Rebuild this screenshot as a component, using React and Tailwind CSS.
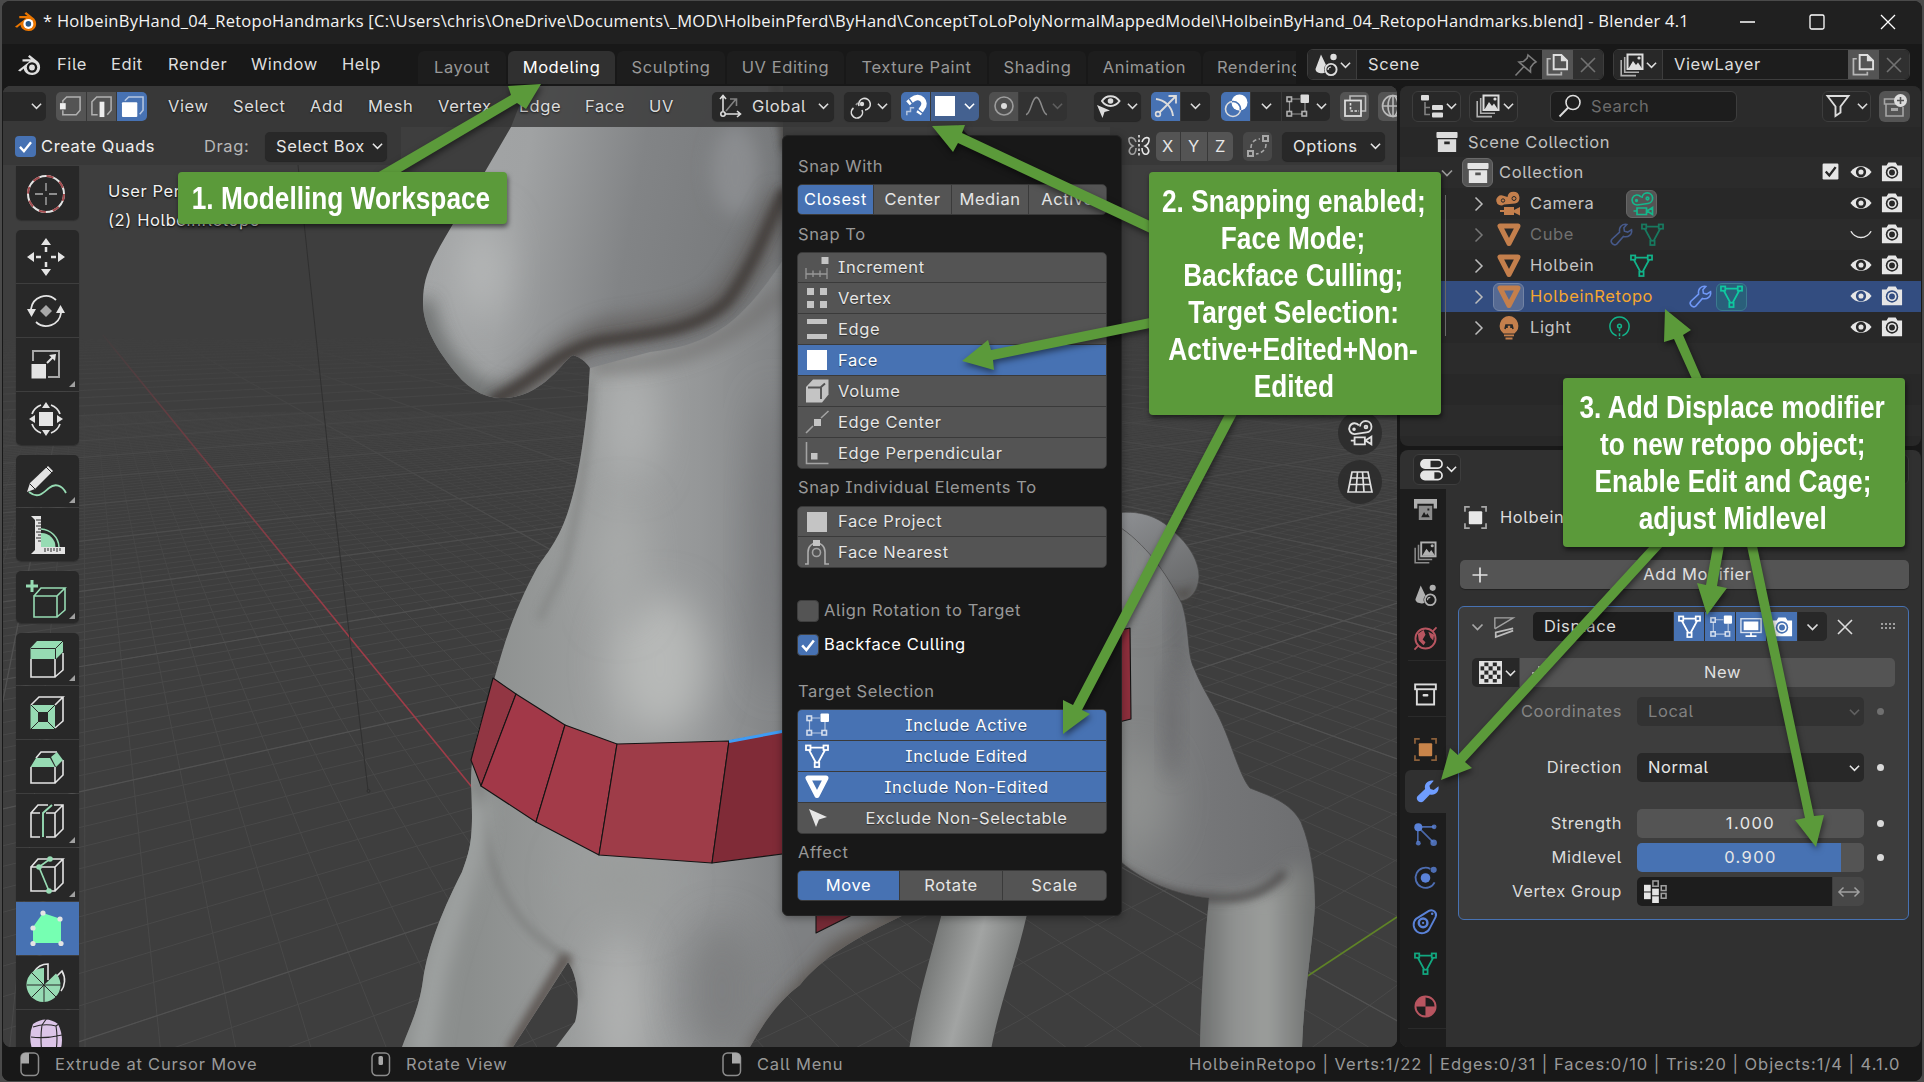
import React from "react";

/* ---------- icons (24 x 24 grid) ---------- */
const S = { fill: "none", stroke: "currentColor", strokeWidth: 1.6 };
const ICONS = {
  logo: (
    <g>
      <path d="M1 17.5 L12.5 8.5 H5.5 V6.3 H14 L11 3.8 L12.6 2 L21 8.8 C25 13 23.5 21.5 15.5 22 C10.5 22.2 7 19 6.8 15.5 L3.2 18.5 Z" fill="currentColor" />
      <circle cx="15" cy="14.5" r="5.2" fill="var(--hole,#181818)" />
      <circle cx="15" cy="14.5" r="2.9" fill="var(--pupil,currentColor)" />
    </g>
  ),
  scene: (
    <g>
      <path d="M7 1.5 L12 12 A5.5 5.5 0 0 0 11 19.5 C9 21 1.5 20.5 1.5 16 Z" fill="currentColor" />
      <circle cx="19.5" cy="4" r="3.2" fill="currentColor" />
      <circle cx="17" cy="16.5" r="5.6" {...S} strokeWidth="1.9" />
      <path d="M14 17 a3 3 0 0 1 3 -3" {...S} strokeWidth="1.2" />
    </g>
  ),
  layers: (
    <g>
      <rect x="7.5" y="1.5" width="15" height="14.5" {...S} strokeWidth="2" />
      <path d="M8.5 15.5 L13 8 L16 12 L18 9.5 L22 15.5 Z" fill="currentColor" />
      <circle cx="19" cy="5" r="1.6" fill="currentColor" />
      <path d="M4.7 4 V19.3 H19 M1.2 7 V22.6 H16" {...S} opacity=".75" />
    </g>
  ),
  pin: <path d="M14 2 L22 9 L19.5 10.5 L16.5 14.5 V19 L5 9 L9.5 8.5 L13.2 5 Z M9.5 14 L1.5 22.5" {...S} />,
  copy: (
    <g>
      <path d="M8 2 H16 L22 8 V17 H8 Z" {...S} strokeWidth="2" />
      <path d="M15.5 1.5 V8.5 H22.5 Z" fill="currentColor" />
      <path d="M5 6 H1.5 V22.5 H16 V19.5" {...S} opacity=".7" strokeWidth="1.8" />
    </g>
  ),
  x: <path d="M5 5 L19 19 M19 5 L5 19" {...S} />,
  plus: <path d="M12 4.5 V19.5 M4.5 12 H19.5" {...S} strokeWidth="1.7" />,
  selV: (
    <g>
      <path d="M4 8 V6 L8 2 H22 V16 L18 20.5 H4 V16" {...S} opacity=".6" />
      <rect x="1" y="8.5" width="6" height="6.5" fill="currentColor" />
    </g>
  ),
  selE: (
    <g>
      <path d="M8 20.5 H2 V7 L7 2 H22 V16 L18 20.5" {...S} opacity=".6" />
      <rect x="10" y="7" width="5" height="16" fill="currentColor" />
    </g>
  ),
  selF: (
    <g>
      <path d="M4 6 L8 2 H23 V16 L19.5 20" {...S} opacity=".6" />
      <rect x="1" y="7.5" width="16" height="15.5" rx="1" fill="currentColor" />
    </g>
  ),
  orient: (
    <g>
      <path d="M5 17 V2 M2 5 L5 1.5 L8 5 M7 20 H22 M19 17 L22.5 20 L19 23" {...S} />
      <circle cx="5" cy="20" r="2.2" {...S} />
      <path d="M8 17 L18 5 M12 5 H18.5 V12" {...S} opacity=".5" />
    </g>
  ),
  pivot: (
    <g>
      <path d="M9 12 A5.8 5.8 0 1 1 15 16 M3.5 14 A5.6 5.6 0 1 0 12 16" {...S} />
      <path d="M8 9 A5.8 5.8 0 0 0 6 11" {...S} opacity=".6" />
      <circle cx="12" cy="10" r="2.2" fill="currentColor" />
    </g>
  ),
  magnet: (
    <g>
      <path d="M3.2 9 L8 5 C16 -1.500 25 7.500 18.500 15 L14.800 20.500" fill="none" stroke="currentColor" strokeWidth="6" />
      <path d="M4.500 4 L9 10.500 M20 20.500 L13 15" stroke="#4772b3" strokeWidth="1.600" />
      <path d="M2 22 V18 H6 V14 H10" {...S} opacity=".6" />
    </g>
  ),
  prop: (
    <g>
      <circle cx="12" cy="12" r="9" {...S} opacity=".55" />
      <circle cx="12" cy="12" r="3" fill="currentColor" />
    </g>
  ),
  falloff: <path d="M1 21 C6 21 7 3 12 3 C17 3 18 21 23 21" {...S} />,
  visib: (
    <g>
      <path d="M5 7 C9 .5 18 .5 22.500 7 C18 13.500 9 13.500 5 7 Z" {...S} strokeWidth="2" />
      <circle cx="13.500" cy="7" r="2.800" fill="currentColor" />
      <path d="M0 11 L13 16.500 L7.500 18 L5.500 24 Z" fill="currentColor" />
    </g>
  ),
  gizmo: (
    <g>
      <path d="M2 5 C10 6 18 12 19 22" {...S} strokeWidth="2" />
      <path d="M5 19 L21 3 M14.5 2 H22 V9.5" {...S} strokeWidth="1.8" />
      <circle cx="4" cy="20" r="2.4" {...S} />
    </g>
  ),
  overlay: (
    <g>
      <circle cx="9" cy="15" r="7.5" {...S} />
      <circle cx="15.500" cy="8.500" r="8" fill="#fff" />
      <path d="M8 7.600 A7.500 7.500 0 0 1 16.400 16" {...S} stroke="#4772b3" />
    </g>
  ),
  editmode: (
    <g>
      <path d="M7 5 H15 M4.5 7.5 V17 M7 20 H17 M20 9 V17" {...S} strokeWidth="1.2" opacity=".6" />
      <g opacity=".75">
        <rect x="2" y="3" width="4.5" height="4.5" {...S} />
        <rect x="2" y="17.5" width="4.5" height="4.5" {...S} />
        <rect x="17" y="17.5" width="4.5" height="4.5" {...S} />
      </g>
      <rect x="15.5" y="0.5" width="8.5" height="8.5" rx="1" fill="currentColor" />
    </g>
  ),
  xray: (
    <g>
      <rect x="2" y="6.500" width="16" height="15.5" {...S} strokeWidth="1.8" />
      <path d="M7 6 V2 H22.5 V17 H18" {...S} opacity=".75" />
      <path d="M7.500 9 V17 H16" {...S} strokeDasharray="2.500 1.500" />
    </g>
  ),
  globe: (
    <g opacity=".75">
      <circle cx="12" cy="12" r="10.500" {...S} />
      <ellipse cx="12" cy="12" rx="5" ry="10.500" {...S} />
      <path d="M2 12 H22 M12 2 V22" {...S} />
    </g>
  ),
  butterfly: (
    <g>
      <path d="M12 1 V23" {...S} strokeDasharray="2.500 2" />
      <path d="M9 8 C7 2 1 3 2 6 C2 9 4 11 6 12 C2 14 1 18 4 20 C7 21 9 19 9 14" {...S} opacity=".6" />
      <path d="M15 8 C17 2 23 3 22 6 C22 9 20 11 18 12 C22 14 23 18 20 20 C17 21 15 19 15 14" {...S} />
    </g>
  ),
  automerge: (
    <g opacity=".6">
      <rect x="2" y="17" width="5" height="5" {...S} strokeWidth="2" />
      <rect x="17" y="2" width="5" height="5" {...S} strokeWidth="2" />
      <path d="M5 14 C5 8 9 5 14 5 M20 10 C20 16 16 19 10 20" {...S} strokeDasharray="4 2.500" />
    </g>
  ),
  outl: (
    <g>
      <rect x="1" y="1" width="8" height="5.5" rx="1" fill="currentColor" />
      <path d="M5 8 V20.5 H10 M5 13.500 H10" {...S} opacity=".5" />
      <rect x="12" y="11" width="11" height="5" rx="1" fill="currentColor" />
      <rect x="12" y="18.500" width="11" height="5" rx="1" fill="currentColor" />
    </g>
  ),
  search: (
    <g>
      <circle cx="15" cy="8.500" r="7" {...S} />
      <path d="M10.300 13.500 L1.500 22.500" {...S} strokeWidth="1.9" />
    </g>
  ),
  filter: <path d="M1.500 2 H22.500 L14.500 12.500 V18.500 L9.500 22 V12.500 Z" {...S} strokeWidth="1.9" />,
  newcol: (
    <g>
      <path d="M13 5 H1.500 V10 H16 M3 10 V22 H20 V13" {...S} opacity=".6" />
      <rect x="8" y="14" width="7" height="3" fill="currentColor" opacity=".6" />
      <circle cx="17.500" cy="6.500" r="6.500" fill="currentColor" />
      <path d="M17.500 3 V10 M14 6.500 H21" stroke="#545454" strokeWidth="1.6" />
    </g>
  ),
  box: (
    <g fill="currentColor">
      <rect x=".5" y="1" width="23" height="6.500" rx="1" />
      <path d="M2 9 H22 V23 H2 Z M9 11.500 V14.500 H15 V11.500 Z" fillRule="evenodd" />
    </g>
  ),
  boxo: (
    <g>
      <rect x="1.200" y="1.500" width="21.600" height="5" {...S} strokeWidth="2" />
      <path d="M3 7 V22.500 H21 V7" {...S} strokeWidth="2" />
      <rect x="9" y="11.500" width="6" height="2.500" rx="1" fill="currentColor" />
    </g>
  ),
  movie: (
    <g>
      <path d="M5.500 3.500 A5 5 0 1 0 7 12.500 L18 11.500 A6 6 0 1 0 10.500 5 Z" fill="currentColor" />
      <circle cx="6" cy="8.500" r="1.700" fill="none" stroke="#282828" />
      <circle cx="17" cy="6.500" r="2" fill="none" stroke="#282828" />
      <path d="M7 15 H17 V18 L23 15 V23.500 L17 20.500 V23 H7 V20 H3 V18 H7 Z" fill="currentColor" />
    </g>
  ),
  movieo: (
    <g {...S} strokeWidth="1.7">
      <path d="M11 5 A5 5 0 1 0 7 13 L18 11.500 A5.300 5.300 0 1 0 12 6" />
      <circle cx="17.500" cy="6.500" r="1.300" />
      <circle cx="6.500" cy="8.500" r=".8" />
      <path d="M7 16 H16.500 V22.500 H7 Z M3.500 19 H7 M17 19 L22.500 15.500 V22.500 Z" />
    </g>
  ),
  tri: <path d="M3 3 H21 L12 20.500 Z" fill="none" stroke="currentColor" strokeWidth="5" strokeLinejoin="round" />,
  trio: (
    <g {...S} strokeWidth="1.8">
      <rect x="1" y="1.500" width="4.500" height="4.500" />
      <rect x="18.500" y="1.500" width="4.500" height="4.500" />
      <rect x="9.700" y="18.500" width="4.500" height="4.500" />
      <path d="M5.500 3.700 H18.500 M4 6 L10.500 18 M20 6 L13.500 18" />
    </g>
  ),
  wrencho: <path d="M22.500 7 L18.500 9.500 L15 8.500 L14.500 5 L17.500 1.500 C13 .8 9 4 10 9.500 L2 17 C-.5 20 4 24.500 7 22 L14 14 C19 15.500 23.500 12 22.500 7 Z" {...S} />,
  wrench: <path d="M23.500 6.500 L18.500 10.500 L15 9.500 L14 6 L18.500 .8 C13 -.5 8 4 9.500 9.500 L1.500 17 C-1 20.500 4 25 7.500 22.500 L14.500 15 C20 16.500 24.500 12 23.500 6.500 Z" fill="currentColor" />,
  bulb: (
    <g fill="currentColor">
      <path d="M12 0 A9.800 9.800 0 0 1 17.500 17.500 H6.500 A9.800 9.800 0 0 1 12 0 Z" />
      <path d="M8 13 L9 9 H15 L16 13 M10 9 V12 M14 9 V12" fill="none" stroke="#282828" strokeWidth="1.600" />
      <rect x="7" y="18.500" width="10" height="1.800" />
      <rect x="8.500" y="21.500" width="7" height="2" />
    </g>
  ),
  lighto: (
    <g {...S}>
      <path d="M9 20.500 A10 10 0 1 1 15 20.500" />
      <circle cx="12" cy="10.500" r="2" />
      <path d="M12 13 V24" strokeDasharray="3 2" />
    </g>
  ),
  eye: (
    <g>
      <path d="M.5 12 C6 3.500 18 3.500 23.500 12 C18 20.500 6 20.500 .5 12 Z" fill="currentColor" />
      <circle cx="12" cy="12" r="5.600" fill="var(--hole,#282828)" />
      <circle cx="12" cy="12" r="2.800" fill="currentColor" />
    </g>
  ),
  eyec: <path d="M1 9 C6 18 18 18 23 9" {...S} />,
  cam: (
    <g>
      <path d="M1 5 H6 L8 1.500 H16 L18 5 H23 V22 H1 Z" fill="currentColor" />
      <circle cx="12" cy="12.500" r="6.800" fill="var(--hole,#282828)" />
      <circle cx="12" cy="12.500" r="5" fill="currentColor" />
      <circle cx="12" cy="12.500" r="3.200" fill="var(--hole,#282828)" />
    </g>
  ),
  check: (
    <g>
      <rect x="2" y="2" width="20" height="20" rx="1.500" fill="currentColor" />
      <path d="M6 12 L10.500 17 L18.500 6.500" fill="none" stroke="#282828" strokeWidth="3" />
    </g>
  ),
  tick: <path d="M5 12.500 L10 18 L19 6.500" fill="none" stroke="currentColor" strokeWidth="3" />,
  props: (
    <g>
      <rect x="1" y="2" width="22" height="8.500" rx="4.200" {...S} strokeWidth="1.8" />
      <path d="M5 2 H11 V10.500 H5 A4.200 4.200 0 0 1 5 2 Z" fill="currentColor" />
      <rect x="1" y="14" width="22" height="8.500" rx="4.200" {...S} strokeWidth="1.8" />
      <path d="M5 14 H15 V22.500 H5 A4.200 4.200 0 0 1 5 14 Z" fill="currentColor" />
    </g>
  ),
  printer: (
    <g fill="currentColor">
      <path d="M0 1 H24 V11 H20.500 V6 H3.500 V11 H0 Z" />
      <path d="M5 8 H19 V23 H5 Z M7.500 20 H16.500 L14 16 L12.500 18 L10.500 14.500 Z M14 11 V13 H16 V11 Z" fillRule="evenodd" opacity=".75" />
    </g>
  ),
  world: (
    <g>
      <circle cx="12" cy="12" r="10.500" {...S} strokeWidth="2" />
      <path d="M4 7 L10 3 L12 8 L9 13 L12 16 L10 19 L5 14 Z M15 5 L21 8 L20 14 L17 11 Z" fill="currentColor" />
      <path d="M19 5 L23.500 .5 M.5 23.500 L5 19" {...S} strokeWidth="1.8" />
    </g>
  ),
  obj: (
    <g>
      <path d="M1 6 V1 H6 M18 1 H23 V6 M23 18 V23 H18 M6 23 H1 V18" {...S} strokeWidth="1.800" opacity=".65" />
      <rect x="5" y="5.500" width="14" height="13.500" rx="1" fill="currentColor" />
    </g>
  ),
  particles: (
    <g>
      <path d="M4 4 H21 M4 4 L20 20 M4 8 V20" {...S} strokeWidth="1.7" opacity=".75" />
      <circle cx="4.500" cy="4.500" r="4.200" fill="currentColor" />
      <g fill="currentColor" opacity=".8">
        <circle cx="21" cy="4" r="2.500" />
        <circle cx="4.500" cy="21" r="2.500" />
        <circle cx="20.500" cy="20.500" r="3.400" />
      </g>
    </g>
  ),
  physics: (
    <g>
      <path d="M17 3 A10.500 10.500 0 1 0 21.500 17" {...S} strokeWidth="1.900" opacity=".8" />
      <circle cx="12" cy="12.500" r="5" fill="currentColor" />
      <circle cx="20.500" cy="4" r="3.200" fill="currentColor" opacity=".8" />
    </g>
  ),
  constraint: (
    <g>
      <path d="M2.500 10 L15.500 2 A5 5 0 0 1 22.500 8.500 L16.500 20 A8.800 8.800 0 1 1 2.500 10 Z" {...S} strokeWidth="2" />
      <circle cx="9.500" cy="14.500" r="4.500" {...S} strokeWidth="2.600" />
      <circle cx="9.500" cy="14.500" r="1.200" fill="currentColor" />
      <circle cx="19" cy="5" r="1.300" fill="currentColor" />
    </g>
  ),
  material: (
    <g>
      <circle cx="12" cy="12" r="10.500" {...S} strokeWidth="2" />
      <path d="M12 1.500 V12 H22.500 A10.500 10.500 0 0 1 12 22.500 V12 H1.500 A10.500 10.500 0 0 1 12 1.500 Z" fill="currentColor" opacity=".25" />
      <path d="M12 1.500 V12 H1.500 A10.500 10.500 0 0 1 12 1.500 Z M12 12 H22.500 A10.500 10.500 0 0 1 12 22.500 Z" fill="currentColor" />
    </g>
  ),
  displace: (
    <g>
      <path d="M2 14 V2 H22 L2 14" {...S} strokeWidth="1.500" opacity=".8" />
      <path d="M22 13.500 L3 18 V23 L22 16" {...S} strokeWidth="1.900" />
    </g>
  ),
  monitor: (
    <g>
      <rect x="1" y="3" width="22" height="15" {...S} strokeWidth="1.500" opacity=".8" />
      <rect x="4" y="6" width="16" height="9.500" fill="currentColor" />
      <path d="M12 18 V21.500 M6 22 H18" {...S} strokeWidth="1.800" />
    </g>
  ),
  checker: (
    <g>
      <rect x=".8" y=".8" width="22.400" height="22.400" {...S} />
      {[0, 1, 2, 3, 4].map((r) =>
        [0, 1, 2, 3, 4].map((c) => ((r + c) % 2 ? null : <rect key={r + "-" + c} x={1 + c * 4.4} y={1 + r * 4.4} width="4.600" height="4.600" fill="currentColor" />))
      )}
    </g>
  ),
  vgroup: (
    <g>
      <rect x="0" y="5" width="7" height="7" fill="currentColor" />
      <rect x="0" y="13" width="7" height="7" fill="currentColor" />
      <rect x="8.500" y="9" width="7" height="7" fill="currentColor" />
      <rect x="8.500" y="17" width="7" height="7" fill="currentColor" />
      <g {...S} opacity=".65">
        <rect x="9.300" y="1" width="5.500" height="5.500" />
        <rect x="18" y="6" width="5" height="5" />
        <rect x="18" y="14" width="5" height="5" />
      </g>
    </g>
  ),
  swap: <path d="M1 12 H23 M6 7 L1 12 L6 17 M18 7 L23 12 L18 17" {...S} />,
  inc: (
    <g>
      <path d="M1 12 V23 M22 12 V23 M1 18 H22 M8 14.500 V21 M15 14.500 V21" {...S} strokeWidth="1.300" opacity=".6" />
      <rect x="16.500" y="1" width="7" height="7" fill="currentColor" />
    </g>
  ),
  vert: (
    <g fill="currentColor">
      <rect x="2" y="2" width="7" height="7" />
      <rect x="15" y="2" width="7" height="7" />
      <rect x="2" y="15" width="7" height="7" />
      <rect x="15" y="15" width="7" height="7" />
    </g>
  ),
  edge: (
    <g fill="currentColor">
      <rect x="2" y="2" width="20" height="5" />
      <rect x="2" y="17" width="20" height="5" />
    </g>
  ),
  face: <rect x="2" y="2" width="20" height="20" fill="currentColor" />,
  volume: (
    <g>
      <path d="M1 8 L8 .5 H23.500 V15.500 L17 23.500 H1 Z" fill="currentColor" />
      <path d="M3 8.500 H15.500 L20 4.500 M16 8.500 V20" fill="none" stroke="#545454" strokeWidth="1.900" />
    </g>
  ),
  ecenter: (
    <g>
      <path d="M1 23 L8 16 M16 8 L23.500 1" {...S} opacity=".7" />
      <rect x="9" y="9" width="7" height="7" fill="currentColor" />
    </g>
  ),
  eperp: (
    <g>
      <path d="M1.500 1 V22.500 H23.500" {...S} opacity=".7" />
      <rect x="6" y="12" width="6.500" height="6.500" fill="currentColor" />
    </g>
  ),
  nearest: (
    <g>
      <path d="M0 24 H3 V12 C3 0 20 0 20 12 V24 H24" {...S} opacity=".8" />
      <circle cx="11.500" cy="12.500" r="4" {...S} opacity=".7" />
      <rect x="8" y="0" width="7" height="6" fill="currentColor" />
    </g>
  ),
  cursor: <path d="M4 3 L22 11 L14 13.500 L11 21 Z" fill="currentColor" />,
};
function Ic({ n, className = "size-6" }) {
  return (
    <svg viewBox="0 0 24 24" className={"shrink-0 overflow-visible " + className}>
      {ICONS[n]}
    </svg>
  );
}
function Chev({ className = "w-[11px]" }) {
  return (
    <svg viewBox="0 0 12 8" className={"h-[8px] shrink-0 " + className}>
      <path d="M1 1.500 L6 6.500 L11 1.500" fill="none" stroke="currentColor" strokeWidth="1.700" />
    </svg>
  );
}
function ChevR({ className = "" }) {
  return (
    <svg viewBox="0 0 10 16" className={"h-4 w-[10px] shrink-0 " + className}>
      <path d="M1.500 1.500 L8 8 L1.500 14.500" fill="none" stroke="currentColor" strokeWidth="1.500" />
    </svg>
  );
}

/* ---------- 3D scene ---------- */
const O = [864, 1268];
const VX = [84, 290];
const VY = [2353, 285];
function ground(t, s) {
  const d = 1 + t + s;
  return [(O[0] + t * VX[0] + s * VY[0]) / d, (O[1] + t * VX[1] + s * VY[1]) / d];
}
function gridPath(step, along, count, far) {
  let p = "";
  for (let i = -count; i <= count; i++) {
    if (i === 0) continue;
    const k = i * step;
    const a = along === "y" ? ground(k, 0.2 - k) : ground(0.2 - k, k);
    const b = along === "y" ? ground(k, far - 1 - k) : ground(far - 1 - k, k);
    p += `M${a[0].toFixed(1)} ${a[1].toFixed(1)}L${b[0].toFixed(1)} ${b[1].toFixed(1)}`;
  }
  return p;
}
const BODY =
  "M590 366 L588 400 C584 440 578 480 570 505 C560 540 545 555 537 568 C516 606 505 640 494 680 C484 715 470 745 471 785 C474 840 470 850 462 872 C445 905 428 945 423 980 C419 1010 408 1030 402 1047 H513 L568 962 C577 975 581 1000 575 1022 L556 1047 H750 C765 1020 780 1000 800 985 C820 960 850 940 910 912 L1000 880 L1121 862 L1121 528 L783 300 V100 L700 86 L600 300 Z";
const HEAD =
  "M527 86 L511 127 L486 170 C465 205 445 235 432 262 C424 280 423 290 423 305 C424 330 440 355 462 380 C475 392 485 397 500 398 C520 398 532 392 545 382 C560 370 565 360 573 355 C580 357 586 362 590 368 L650 352 C710 345 740 325 783 260 V86 Z";
const HIND =
  "M1110 520 L1121 528 C1150 548 1170 580 1182 604 C1190 630 1187 655 1194 668 C1205 695 1216 706 1228 738 C1237 762 1243 780 1250 788 C1270 796 1290 802 1301 822 C1312 848 1315 880 1315 905 C1312 950 1304 990 1302 1047 H1200 C1201 1000 1204 950 1209 898 C1175 895 1145 882 1121 862 L1100 840 Z";

function Scene() {
  return (
    <svg viewBox="3 86 1394 961" className="absolute inset-0 h-full w-full">
      <defs>
        <linearGradient id="fade" x1="0" y1="325" x2="0" y2="640" gradientUnits="userSpaceOnUse">
          <stop offset="0" stopColor="#000" />
          <stop offset=".35" stopColor="#777" />
          <stop offset="1" stopColor="#fff" />
        </linearGradient>
        <mask id="gm" maskUnits="userSpaceOnUse" x="0" y="0" width="1924" height="1082">
          <rect width="1924" height="1082" fill="url(#fade)" />
        </mask>
        <linearGradient id="gb" x1="470" y1="0" x2="800" y2="0" gradientUnits="userSpaceOnUse">
          <stop offset="0" stopColor="#8b8e8d" />
          <stop offset=".45" stopColor="#a0a2a2" />
          <stop offset=".7" stopColor="#959798" />
          <stop offset="1" stopColor="#7e8082" />
        </linearGradient>
        <linearGradient id="gh" x1="440" y1="180" x2="760" y2="240" gradientUnits="userSpaceOnUse">
          <stop offset="0" stopColor="#a3a5a6" />
          <stop offset=".25" stopColor="#a0a2a3" />
          <stop offset=".6" stopColor="#828486" />
          <stop offset="1" stopColor="#77797b" />
        </linearGradient>
        <linearGradient id="gr" x1="1110" y1="0" x2="1315" y2="0" gradientUnits="userSpaceOnUse">
          <stop offset="0" stopColor="#868888" />
          <stop offset=".5" stopColor="#757678" />
          <stop offset="1" stopColor="#6d6e70" />
        </linearGradient>
        <linearGradient id="leg" x1="1200" y1="0" x2="1312" y2="0" gradientUnits="userSpaceOnUse">
          <stop offset="0" stopColor="#6e706f" />
          <stop offset=".3" stopColor="#8f9190" />
          <stop offset=".6" stopColor="#9b9d9b" />
          <stop offset="1" stopColor="#707271" />
        </linearGradient>
        <linearGradient id="leg2" x1="925" y1="960" x2="1015" y2="985" gradientUnits="userSpaceOnUse">
          <stop offset="0" stopColor="#747675" />
          <stop offset=".5" stopColor="#a2a4a3" />
          <stop offset="1" stopColor="#777978" />
        </linearGradient>
        <linearGradient id="tail" x1="1130" y1="515" x2="1175" y2="600" gradientUnits="userSpaceOnUse">
          <stop offset="0" stopColor="#8b8d90" />
          <stop offset="1" stopColor="#676869" />
        </linearGradient>
        <clipPath id="cb"><path d={BODY} /></clipPath>
        <clipPath id="ch"><path d={HEAD} /></clipPath>
        <clipPath id="cr"><path d={HIND} /></clipPath>
        <filter id="b4" x="-50%" y="-50%" width="200%" height="200%"><feGaussianBlur stdDeviation="4" /></filter>
        <filter id="b9" x="-50%" y="-50%" width="200%" height="200%"><feGaussianBlur stdDeviation="9" /></filter>
        <filter id="b20" x="-80%" y="-80%" width="260%" height="260%"><feGaussianBlur stdDeviation="20" /></filter>
      </defs>
      <rect width="1924" height="1082" fill="#3e3e3e" />
      <g mask="url(#gm)" fill="none">
        <path d={gridPath(0.065, "y", 110, 8)} stroke="#494949" />
        <path d={gridPath(0.0429, "x", 170, 8)} stroke="#494949" />
        <path d={gridPath(0.65, "y", 30, 20)} stroke="#525252" strokeWidth="1.200" />
        <path d={gridPath(0.429, "x", 44, 20)} stroke="#525252" strokeWidth="1.200" />
        <path d="M103 335 L480 797" stroke="#a03c48" strokeWidth="1.600" />
        <path d="M1300 981 L1397 917" stroke="#5f8327" strokeWidth="1.700" />
      </g>
      <path d="M298 165 L330 470 L350 640 L368 790" stroke="#303030" fill="none" />
      <circle cx="368.500" cy="791" r="1.500" stroke="#303030" fill="none" />

      <path d="M1110 514 C1140 508 1160 518 1172 530 C1190 545 1199 562 1199 577 C1198 592 1190 600 1180 601 L1110 580 Z" fill="url(#tail)" stroke="#4a4a4a" strokeWidth=".7" />
      <path d="M1165 585 C1175 592 1188 592 1196 582 L1186 602 Z" fill="#4a4541" filter="url(#b4)" opacity=".7" />

      <path d="M944 905 C930 960 917 1000 909 1050 H991 C1000 1000 1018 960 1030 900 Z" fill="url(#leg2)" />

      <path d={HIND} fill="url(#gr)" stroke="#444" strokeWidth=".8" />
      <g clipPath="url(#cr)">
        <path d="M1209 890 C1240 900 1275 890 1296 862 L1320 880 L1320 1060 H1195 Z" fill="url(#leg)" filter="url(#b9)" />
        <path d="M1204 905 H1320 V1060 H1195 Z" fill="url(#leg)" filter="url(#b4)" />
        <path d="M1110 860 C1150 890 1180 899 1225 898 C1250 898 1268 890 1285 872" stroke="#4c4a48" strokeWidth="7" fill="none" filter="url(#b4)" />
        <ellipse cx="1135" cy="800" rx="32" ry="50" fill="#8f9190" filter="url(#b20)" />
        <ellipse cx="1178" cy="620" rx="8" ry="60" fill="#5c5d5e" filter="url(#b9)" opacity=".6" />
        <ellipse cx="1172" cy="720" rx="9" ry="60" fill="#67686a" filter="url(#b9)" opacity=".7" />
        <ellipse cx="1140" cy="560" rx="18" ry="60" fill="#8b8d8f" filter="url(#b20)" opacity=".8" />
      </g>

      <path d={BODY} fill="url(#gb)" />
      <g clipPath="url(#cb)">
        <ellipse cx="632" cy="420" rx="22" ry="60" fill="#b1b3b3" filter="url(#b20)" />
        <ellipse cx="660" cy="665" rx="46" ry="70" fill="#b7b9b8" filter="url(#b20)" />
        <ellipse cx="620" cy="560" rx="22" ry="60" fill="#a9abaa" filter="url(#b20)" />
        <path d="M590 380 C590 440 580 500 566 560 C556 590 545 600 540 620" stroke="#838584" strokeWidth="7" fill="none" filter="url(#b4)" opacity=".8" />
        <ellipse cx="775" cy="540" rx="20" ry="150" fill="#747678" filter="url(#b20)" />
        <path d="M479 780 C483 870 510 920 552 948 C570 962 578 975 577 1000" stroke="#7b7d7c" strokeWidth="5" fill="none" filter="url(#b4)" />
        <path d="M478 800 C474 870 445 920 433 980 L420 1060" stroke="#9fa2a1" strokeWidth="24" fill="none" filter="url(#b9)" />
        <path d="M568 955 L510 1052" stroke="#5d5753" strokeWidth="12" fill="none" filter="url(#b4)" />
        <ellipse cx="620" cy="1010" rx="22" ry="70" fill="#b2b4b3" filter="url(#b20)" />
        <ellipse cx="620" cy="880" rx="50" ry="40" fill="#9a9c9b" filter="url(#b20)" />
        <path d="M910 914 L838 952 C810 985 780 1010 752 1055" stroke="#564f4a" strokeWidth="18" fill="none" filter="url(#b9)" />
        <ellipse cx="722" cy="990" rx="40" ry="70" fill="#7a7c7d" filter="url(#b20)" opacity=".8" />
        <path d="M590 366 C650 366 720 355 783 290" stroke="#6b6967" strokeWidth="10" fill="none" filter="url(#b9)" />
      </g>

      <path d={HEAD} fill="url(#gh)" />
      <g clipPath="url(#ch)">
        <ellipse cx="482" cy="270" rx="22" ry="50" fill="#b7b9b9" filter="url(#b20)" />
        <path d="M420 300 C430 360 470 405 520 400" stroke="#5c5e5d" strokeWidth="26" fill="none" filter="url(#b9)" opacity=".7" />
        <ellipse cx="735" cy="170" rx="24" ry="45" fill="#8a8c8f" filter="url(#b9)" />
        <path d="M500 405 C545 378 560 345 610 332 C660 326 700 320 725 298 C750 270 765 230 785 195" stroke="#605d5b" strokeWidth="30" fill="none" filter="url(#b9)" opacity=".75" />
        <path d="M490 402 C535 382 555 352 600 341 C660 333 700 328 728 300 C752 268 766 230 785 190" stroke="#443f3c" strokeWidth="12" fill="none" filter="url(#b4)" />
        <path d="M590 375 C650 368 700 352 745 335 L785 270 V380 H590 Z" fill="#85878a" filter="url(#b9)" />
        <path d="M775 80 C778 110 788 130 788 150" stroke="#4a4645" strokeWidth="12" fill="none" filter="url(#b4)" />
      </g>

      <g stroke="#141414" strokeWidth="1.100" strokeLinejoin="round">
        <path d="M493 678 L516 694 L481 786 L471 760 Z" fill="#923643" />
        <path d="M516 694 L565 725 L536 822 L481 786 Z" fill="#a23848" />
        <path d="M565 725 L617 744 L599 855 L536 822 Z" fill="#a33b49" />
        <path d="M617 744 L729 741 L712 863 L599 855 Z" fill="#9e3c48" />
        <path d="M729 741 L790 730 V853 L712 863 Z" fill="#802b37" />
        <path d="M1115 631 L1130 628 L1131 719 L1115 723 Z" fill="#8e2f3d" />
        <path d="M816 910 V933 L862 910 Z" fill="#752a35" />
      </g>
      <path d="M729 741.500 L790 730" stroke="#3f9cf5" strokeWidth="3" />
    </svg>
  );
}

/* ---------- tool icons ---------- */
const G = "#96dbb3";
const W = "#e4e4e4";
const TOOLS = {
  cursor3d: (
    <g fill="none">
      <circle cx="19" cy="19" r="18" stroke={W} strokeWidth="2" />
      <circle cx="19" cy="19" r="18" stroke="#a24a4d" strokeWidth="2" strokeDasharray="7 7.140" />
      <path d="M19 8 V16 M19 22 V30 M8 19 H16 M22 19 H30" stroke="#b0b0b0" strokeWidth="1.300" />
    </g>
  ),
  move: (
    <g fill={W}>
      <path d="M19 0 L24 7 H14 Z M19 38 L24 31 H14 Z M0 19 L7 14 V24 Z M38 19 L31 14 V24 Z" />
      <path d="M19 9 V14 M19 24 V29 M9 19 H14 M24 19 H29" stroke={W} strokeWidth="2.500" />
    </g>
  ),
  rotate: (
    <g>
      <path d="M4 17 A15 15 0 0 1 29 8 M34 21 A15 15 0 0 1 9 30" fill="none" stroke={W} strokeWidth="1.800" />
      <path d="M0 17 H9 L4.500 25 Z M29 21 H38 L33.500 13 Z" fill={W} />
      <path d="M19 13 L25 19 L19 25 L13 19 Z" fill="#a8a8a8" />
    </g>
  ),
  scale: (
    <g>
      <path d="M6 15 V5 H32 V31 H21" fill="none" stroke="#a8a8a8" strokeWidth="2" />
      <rect x="4.500" y="18" width="14.500" height="14.500" fill={W} />
      <path d="M20 17 L26 11" stroke={W} strokeWidth="2" />
      <path d="M22 9 L29 8 L28 15 Z" fill={W} />
    </g>
  ),
  transform: (
    <g>
      <path d="M5 14 A15 15 0 0 1 14 5 M24 5 A15 15 0 0 1 33 14 M33 24 A15 15 0 0 1 24 33 M14 33 A15 15 0 0 1 5 24" fill="none" stroke={W} strokeWidth="1.700" />
      <rect x="12" y="12" width="14" height="14" fill={W} />
      <path d="M19 2 L23 8 H15 Z M19 36 L23 30 H15 Z M2 19 L8 15 V23 Z M36 19 L30 15 V23 Z" fill={W} />
    </g>
  ),
  annotate: (
    <g>
      <path d="M2 29 C12 37 18 28 22 25 C28 20 35 22 39 30" fill="none" stroke={G} strokeWidth="1.800" />
      <path d="M0 29 L3 20 L21 3 L26 8 L8 26 Z" fill={W} />
      <path d="M19 4 L25 10 M3 21 L8 26" stroke="#282828" />
    </g>
  ),
  measure: (
    <g>
      <path d="M4 0 H14 V31 H38 V38 H4 L8 34 V4 Z" fill={W} />
      <path d="M14 13 A19 19 0 0 1 32 31" fill="none" stroke={G} strokeWidth="1.600" />
      <path d="M14 17 A14 14 0 0 1 28.500 31 H14 Z" fill={G} />
      <path d="M9 4 H14 M11 7 H14 M9 10 H14 M11 13 H14 M9 16 H14 M11 19 H14 M9 22 H14 M11 25 H14 M18 32 V36 M21 32 V35 M24 32 V36 M27 32 V35 M30 32 V36 M33 32 V35" stroke="#282828" />
    </g>
  ),
  addcube: (
    <g fill="none" stroke={G}>
      <path d="M7 17 H30 V38 H7 Z M7 17 L14 9 H38 L30 17 M38 9 V31 L30 38" strokeWidth="1.600" />
      <path d="M5 1 V13 M-1 7 H11" strokeWidth="3" />
    </g>
  ),
  extrude: (
    <g>
      <path d="M4 18 V36 H28 V18 M28 36 L36 29 V12" fill="none" stroke={W} strokeWidth="1.600" />
      <path d="M3.500 7 L10 0 H36 V11 L29 18 H3.500 Z" fill={G} />
      <path d="M4 7.500 H28.500 L36 0 M28.500 7.500 V18" stroke="#282828" fill="none" />
    </g>
  ),
  inset: (
    <g>
      <path d="M4 11 L12 3 H36 L28 11 M36 3 V27 L28 34" fill="none" stroke={W} strokeWidth="1.600" />
      <path d="M3.500 11 H28 V35 H3.500 Z M11 18 V28 H21 V18 Z" fill={G} fillRule="evenodd" />
      <path d="M4 11 L11 18 M28 11 L21 18 M4 35 L11 28 M28 35 L21 28" stroke="#282828" />
    </g>
  ),
  bevel: (
    <g>
      <path d="M4 19 V35 H28 V19 M28 35 L36 27 V12 M9 10 L14 4 H30" fill="none" stroke={W} strokeWidth="1.600" />
      <path d="M3.500 19 L9 10 H23 L28 19 Z M24 9 L30 4 L36 12 L29 19 Z" fill={G} />
    </g>
  ),
  loopcut: (
    <g fill="none">
      <path d="M13 11 H4 V35 H13 M19 35 H28 V11 H19 M4 11 L11 3 H21 M27 3 H36 V27 L28 35 M28 11 L36 3" stroke={W} strokeWidth="1.600" />
      <path d="M16 35 V11 L25 3" stroke={G} strokeWidth="1.900" />
    </g>
  ),
  knife: (
    <g fill="none">
      <path d="M4 11 H28 V35 H4 Z M4 11 L11 3 H36 L28 11 M36 3 V27 L28 35" stroke={W} strokeWidth="1.600" />
      <path d="M23 3 L12 11 L22 35" stroke={G} strokeWidth="1.700" />
      <g fill={G}>
        <circle cx="23" cy="3" r="2.800" />
        <circle cx="12" cy="11" r="2.800" />
        <circle cx="22" cy="35" r="2.800" />
      </g>
    </g>
  ),
  polybuild: (
    <g>
      <path d="M16 3 L34 9 V33 H6 V17 Z" fill="#76ffb2" />
      <g fill={W}>
        <circle cx="16" cy="3" r="2.600" />
        <circle cx="33" cy="9" r="2.600" />
        <circle cx="6" cy="18" r="2.600" />
        <circle cx="6" cy="33.500" r="2.600" />
        <circle cx="34" cy="33.500" r="2.600" />
      </g>
    </g>
  ),
  spin: (
    <g>
      <path d="M7 8 C10 3 15 0 21 0 V16 M30 12 L35 7 C39 14 38 22 34 27" fill="none" stroke={W} strokeWidth="1.600" />
      <path d="M17 21 V4 A17 17 0 1 0 29 9.500 Z" fill={G} />
      <path d="M17 21 V38 M0 21 H34 M17 21 L5 9 M17 21 L5 33 M17 21 L29 33" stroke="#282828" />
    </g>
  ),
  smooth: (
    <g>
      <path d="M6 6 Q19 -3 31 6 Q37 18 34 30 Q19 40 5 31 Q1 18 6 6 Z" fill="#dcc5e8" />
      <path d="M4 19 Q18 21 35 17 M15 7 Q13 20 15 36 M6 9 Q18 5 29 8 M29 8 Q31 20 29 33 M29 8 L33 5 M15 7 L20 0" stroke="#282828" fill="none" strokeWidth="1.100" />
    </g>
  ),
};
function Tool({ n, sub, on, className = "h-[53px]" }) {
  return (
    <div className={"relative flex w-[63px] shrink-0 items-center justify-center overflow-hidden " + (on ? "bg-[#4772b3] " : "bg-[#282828] ") + className}>
      <svg viewBox="0 0 38 38" className="mt-px mr-[3px] h-[38px] w-[38px] shrink-0 overflow-visible">{TOOLS[n]}</svg>
      {sub && <span className="absolute right-[4px] bottom-[4px] h-[6px] w-[6px] bg-[#a0a0a0] [clip-path:polygon(100%_0,100%_100%,0_100%)]" />}
    </div>
  );
}
function ToolGroup({ children, className = "rounded-[5px]" }) {
  return <div className={"flex w-[63px] shrink-0 flex-col gap-px overflow-hidden shadow-[0_1px_1px_#303030] " + className}>{children}</div>;
}

/* ---------- viewport ---------- */
const drop = "flex h-[29px] items-center rounded-[5px] bg-[#282828] shadow-[0_1px_1px_rgba(0,0,0,.35)]";

function ViewHeader() {
  return (
    <div className="relative flex h-[41px] w-[1394px] shrink-0 items-center bg-[#373737]/80 pb-px text-[#dcdcdc] *:shrink-0">
      <div className="flex h-[29px] w-[43px] items-center justify-end rounded-r-[5px] bg-[#282828] pr-[4px]"><Chev /></div>
      <div className="ml-[10px] flex h-[29px] w-[91px] gap-px overflow-hidden rounded-[5px] text-[#eee]">
        <div className="flex flex-1 items-center justify-center bg-[#545454]"><Ic n="selV" className="size-[23px]" /></div>
        <div className="flex flex-1 items-center justify-center bg-[#545454]"><Ic n="selE" className="size-[23px]" /></div>
        <div className="flex flex-1 items-center justify-center bg-[#4772b3] text-white"><Ic n="selF" className="size-[23px]" /></div>
      </div>
      <div className="flex h-[29px] w-[565px] items-center pl-[21px] [text-shadow:0_1px_2px_#000a]">
        <span className="w-[65px]">View</span><span className="w-[77px]">Select</span><span className="w-[58px]">Add</span>
        <span className="w-[70px]">Mesh</span><span className="w-[81px]">Vertex</span><span className="w-[66px]">Edge</span>
        <span className="w-[64px]">Face</span><span>UV</span>
      </div>
      <div className={drop + " w-[122px] pl-[6px]"}><Ic n="orient" /><span className="w-[67px] pl-[10px]">Global</span><Chev className="ml-[9px] w-[11px]" /></div>
      <div className={drop + " ml-[10px] w-[47px] pl-[6px]"}><Ic n="pivot" /><Chev className="ml-[3px] w-[11px]" /></div>
      <div className="ml-[10px] flex h-[29px] w-[78px] gap-px overflow-hidden rounded-[5px] text-white">
        <div className="flex w-[29px] items-center justify-center bg-[#4772b3]"><Ic n="magnet" className="size-[22px]" /></div>
        <div className="flex w-[48px] items-center bg-[#446190] pl-[2px]"><Ic n="face" /><Chev className="ml-[7px] w-[11px]" /></div>
      </div>
      <div className="ml-[10px] flex h-[29px] w-[78px] gap-px overflow-hidden rounded-[5px]">
        <div className="flex w-[29px] items-center justify-center bg-[#4f4f4f]"><Ic n="prop" /></div>
        <div className="flex w-[48px] items-center bg-[#323232] pl-[6px] text-[#8a8a8a]"><Ic n="falloff" className="h-6 w-[23px]" /><Chev className="ml-[4px] w-[11px] opacity-50" /></div>
      </div>
      <div className={drop + " ml-[27px] w-[47px] pl-[3px]"}><Ic n="visib" /><Chev className="ml-[6px] w-[11px]" /></div>
      <div className="ml-[10px] flex h-[29px] w-[59px] gap-px overflow-hidden rounded-[5px]">
        <div className="flex w-[29px] items-center justify-center bg-[#4772b3]"><Ic n="gizmo" /></div>
        <div className="flex flex-1 items-center justify-center bg-[#282828]"><Chev /></div>
      </div>
      <div className="ml-[11px] flex h-[29px] w-[109px] gap-px overflow-hidden rounded-[5px]">
        <div className="flex w-[29px] items-center justify-center bg-[#4772b3]"><Ic n="overlay" /></div>
        <div className="flex w-[30px] items-center justify-center bg-[#282828]"><Chev /></div>
        <div className="flex flex-1 items-center bg-[#282828] pl-[3px]"><Ic n="editmode" /><Chev className="ml-[7px] w-[11px]" /></div>
      </div>
      <div className="ml-[10px] flex h-[29px] w-[29px] items-center justify-center rounded-[5px] bg-[#545454]"><Ic n="xray" /></div>
      <div className="ml-[9px] flex h-[29px] w-[19px] items-center overflow-hidden rounded-l-[5px] bg-[#545454] pl-[3px]"><Ic n="globe" /></div>
    </div>
  );
}

function ToolSettings() {
  return (
    <div className="relative flex h-[38px] shrink-0 justify-between text-[#e6e6e6]">
      <div className="flex w-[398px] items-center bg-[#383838] pl-[12px] *:shrink-0">
        <div className="flex size-[21px] items-center justify-center rounded-[4px] bg-[#4772b3] text-white"><Ic n="tick" className="size-[19px]" /></div>
        <span className="w-[168px] pl-[5px] text-[#f0f0f0]">Create Quads</span>
        <span className="w-[56px] text-[#b8b8b8]">Drag:</span>
        <div className={drop + " ml-[5px] w-[122px] justify-between pr-[4px] pl-[11px]"}><span>Select Box</span><Chev /></div>
      </div>
      <div className="flex w-[287px] items-center bg-[#383838] pl-[17px] *:shrink-0">
        <Ic n="butterfly" />
        <div className="ml-[5px] flex h-[29px] w-[77px] gap-px overflow-hidden rounded-[5px] text-center leading-[29px]">
          <span className="w-[24px] bg-[#545454]">X</span><span className="w-[26px] bg-[#545454]">Y</span><span className="w-[25px] bg-[#545454]">Z</span>
        </div>
        <div className="ml-[10px] flex size-[29px] items-center justify-center rounded-[5px] bg-[#484848]"><Ic n="automerge" /></div>
        <div className={drop + " ml-[10px] w-[103px] justify-between pr-[4px] pl-[11px]"}><span>Options</span><Chev /></div>
      </div>
    </div>
  );
}

function Viewport() {
  return (
    <div className="relative flex h-[961px] w-[1394px] shrink-0 flex-col overflow-hidden rounded-[8px] bg-[#3e3e3e]">
      <Scene />
      <ViewHeader />
      <ToolSettings />
      <div className="relative flex min-h-0 flex-1">
        <div className="ml-[13px] flex flex-col gap-[10px] pt-px">
          <ToolGroup className="rounded-b-[5px]"><Tool n="cursor3d" className="h-[54px]" /></ToolGroup>
          <ToolGroup><Tool n="move" /><Tool n="rotate" /><Tool n="scale" sub /><Tool n="transform" /></ToolGroup>
          <ToolGroup><Tool n="annotate" sub className="h-[52px]" /><Tool n="measure" /></ToolGroup>
          <ToolGroup><Tool n="addcube" sub className="h-[52px]" /></ToolGroup>
          <ToolGroup>
            <Tool n="extrude" sub className="h-[52px]" /><Tool n="inset" /><Tool n="bevel" /><Tool n="loopcut" sub /><Tool n="knife" sub />
            <Tool n="polybuild" on /><Tool n="spin" /><Tool n="smooth" />
          </ToolGroup>
        </div>
        <div className="ml-[29px] flex flex-col gap-[7px] pt-[15px] text-[#f2f2f2] [text-shadow:0_1px_2px_#000]">
          <span className="leading-[22px]">User Perspective</span>
          <span className="leading-[22px]">(2) HolbeinRetopo</span>
        </div>
        <div className="mt-[246px] mr-[15px] ml-auto flex flex-col gap-[5px] text-[#e0e0e0]">
          <div className="flex size-[44px] items-center justify-center rounded-full bg-[#2c2c2c]/90"><Ic n="movieo" className="size-[26px]" /></div>
          <div className="flex size-[44px] items-center justify-center rounded-full bg-[#2c2c2c]/90">
            <svg viewBox="0 0 26 22" className="h-[22px] w-[26px]" fill="none" stroke="currentColor" strokeWidth="1.700">
              <path d="M5 1 H21 L25 21 H1 Z M4 7 H22.500 M2.500 13.500 H24 M10.500 1 L9 21 M15.500 1 L17 21" />
            </svg>
          </div>
        </div>
      </div>
    </div>
  );
}

/* ---------- snapping popover ---------- */
function SnapRow({ icon, label, on, className = "h-[30px]" }) {
  return (
    <div className={"flex items-center pl-[7px] " + (on ? "bg-[#4772b3] text-white " : "bg-[#545454] text-[#e6e6e6] ") + className}>
      <Ic n={icon} className={on ? "size-6 text-white" : "size-6 text-[#c4c4c4]"} />
      <span className="ml-[9px] [text-shadow:0_1px_1px_#0007]">{label}</span>
    </div>
  );
}
function TargetRow({ icon, label, on }) {
  return (
    <div className={"flex h-[30px] items-center pl-[7px] " + (on ? "bg-[#4772b3] text-white" : "bg-[#545454] text-[#e6e6e6]")}>
      <Ic n={icon} />
      <span className="flex-1 pr-[2px] text-center [text-shadow:0_1px_1px_#0007]">{label}</span>
    </div>
  );
}
const list = "flex flex-col gap-px overflow-hidden rounded-[5px] border border-[#3a3a3a] bg-[#3a3a3a]";
function SnapPopover() {
  return (
    <div className="absolute top-[135px] left-[782px] h-[781px] w-[340px] rounded-[6px] border border-[#242424] bg-[#181818] px-[14px] text-[#989898] shadow-[0_2px_8px_rgba(0,0,0,.35)]">
      <div className="absolute -top-[11px] left-[164px] h-[11px] w-[22px] bg-[#181818] [clip-path:polygon(50%_0,100%_100%,0_100%)]" />
      <div className="mt-[18px] h-[30px] pl-px leading-[24px]">Snap With</div>
      <div className="flex h-[31px] gap-px overflow-hidden rounded-[5px] border border-[#3a3a3a] bg-[#3a3a3a] text-center leading-[29px] text-[#e6e6e6]">
        <span className="w-[75px] bg-[#4772b3] text-white">Closest</span>
        <span className="w-[77px] bg-[#545454]">Center</span>
        <span className="w-[76px] bg-[#545454]">Median</span>
        <span className="flex-1 bg-[#545454]">Active</span>
      </div>
      <div className="mt-[7px] h-[30px] pl-px leading-[24px]">Snap To</div>
      <div className={list}>
        <SnapRow icon="inc" label="Increment" className="h-[29px]" /><SnapRow icon="vert" label="Vertex" /><SnapRow icon="edge" label="Edge" />
        <SnapRow icon="face" label="Face" on /><SnapRow icon="volume" label="Volume" /><SnapRow icon="ecenter" label="Edge Center" /><SnapRow icon="eperp" label="Edge Perpendicular" />
      </div>
      <div className="mt-[6px] h-[31px] pl-px leading-[25px]">Snap Individual Elements To</div>
      <div className={list}>
        <SnapRow icon="face" label="Face Project" className="h-[29px]" /><SnapRow icon="nearest" label="Face Nearest" />
      </div>
      <div className="mt-[31px] flex h-[23px] items-center"><span className="size-[22px] rounded-[4px] border border-[#3f3f3f] bg-[#545454]" /><span className="ml-[5px]">Align Rotation to Target</span></div>
      <div className="mt-[11px] flex h-[23px] items-center"><span className="flex size-[22px] items-center justify-center rounded-[4px] border border-[#3f3f3f] bg-[#4772b3] text-white"><Ic n="tick" className="size-[20px]" /></span><span className="ml-[5px] text-white">Backface Culling</span></div>
      <div className="mt-[23px] h-[30px] pl-px leading-[24px]">Target Selection</div>
      <div className={list}>
        <TargetRow icon="editmode" label="Include Active" on /><TargetRow icon="trio" label="Include Edited" on /><TargetRow icon="tri" label="Include Non-Edited" on /><TargetRow icon="cursor" label="Exclude Non-Selectable" />
      </div>
      <div className="mt-[6px] h-[30px] pl-px leading-[25px]">Affect</div>
      <div className="flex h-[31px] gap-px overflow-hidden rounded-[5px] border border-[#3a3a3a] bg-[#3a3a3a] text-center leading-[29px] text-[#e6e6e6]">
        <span className="w-[101px] bg-[#4772b3] text-white">Move</span><span className="w-[102px] bg-[#545454]">Rotate</span><span className="flex-1 bg-[#545454]">Scale</span>
      </div>
    </div>
  );
}

/* ---------- outliner ---------- */
const obtn = "flex h-[31px] items-center rounded-[6px] border border-[#3d3d3d] bg-[#282828]";
function Vis({ closed, check, blue }) {
  return (
    <div className={"absolute right-[18px] flex items-center pb-[2px] text-[#e6e6e6] " + (blue ? "[--hole:#334d80]" : "")}>
      {check && <Ic n="check" className="mr-[10px] size-[19px]" />}
      <Ic n={closed ? "eyec" : "eye"} className="mr-[9px] size-[22px]" />
      <Ic n="cam" className="size-[22px]" />
    </div>
  );
}
function ObjRow({ icon, label, className = "", labelClass = "text-[#c4c4c4]", boxed, children, closed, blue, dim }) {
  return (
    <div className={"relative flex h-[31px] items-center pl-[74px] " + className}>
      <ChevR className={dim ? "text-[#777]" : "text-[#bbb]"} />
      <span className={"ml-[9px] flex h-[28px] w-[31px] items-center justify-center rounded-[6px] text-[#c47f4c] " + (boxed ? "border border-[#7384a5] bg-[#566a93]" : "")}><Ic n={icon} /></span>
      <span className={"ml-[6px] " + labelClass}>{label}</span>
      {children}
      <Vis closed={closed} blue={blue} />
    </div>
  );
}
function Outliner() {
  return (
    <div className="relative flex h-[360px] flex-col overflow-hidden rounded-[8px] bg-[#282828]">
      <div className="flex h-[41px] items-center bg-[#2b2b2b] pb-px pl-[12px] text-[#dcdcdc]">
        <div className={obtn + " w-[49px] pl-[7px]"}><Ic n="outl" /><Chev className="ml-[2px] w-[11px]" /></div>
        <div className={obtn + " ml-[8px] w-[49px] pl-[6px]"}><Ic n="layers" /><Chev className="ml-[3px] w-[11px]" /></div>
        <div className="ml-[32px] flex h-[31px] w-[187px] items-center rounded-[6px] border border-[#3d3d3d] bg-[#1d1d1d] pl-[7px]"><Ic n="search" /><span className="ml-[9px] text-[#6c6c6c]">Search</span></div>
        <div className={obtn + " ml-[85px] w-[49px] pl-[3px]"}><Ic n="filter" /><Chev className="ml-[7px] w-[11px]" /></div>
        <div className="ml-[8px] flex size-[31px] items-center justify-center rounded-[6px] bg-[#545454]"><Ic n="newcol" /></div>
      </div>
      <div className="flex h-[30px] items-center pl-[36px] text-[#dcdcdc]"><Ic n="box" className="size-[22px]" /><span className="ml-[10px] text-[#c0c0c0]">Scene Collection</span></div>
      <div className="relative flex h-[31px] items-center bg-[#2b2b2b] pl-[40px] text-[#e4e4e4]">
        <Chev className="w-[14px] text-[#999]" />
        <span className="ml-[8px] flex h-[29px] w-[31px] items-center justify-center rounded-[6px] border border-[#6a6a6a] bg-[#545454]"><Ic n="box" className="size-[22px]" /></span>
        <span className="ml-[6px] text-[#c0c0c0]">Collection</span>
        <Vis check />
      </div>
      <div className="relative flex flex-col">
        <ObjRow icon="movie" label="Camera">
          <span className="ml-[32px] flex h-[28px] w-[31px] items-center justify-center rounded-[6px] border border-[#666] bg-[#545454] text-[#14b88c]"><Ic n="movieo" /></span>
        </ObjRow>
        <ObjRow icon="tri" label="Cube" className="bg-[#2b2b2b]" labelClass="text-[#707070]" closed dim>
          <Ic n="wrencho" className="ml-[36px] size-[23px] text-[#46598a]" /><Ic n="trio" className="ml-[8px] size-[23px] text-[#187a60]" />
        </ObjRow>
        <ObjRow icon="tri" label="Holbein"><Ic n="trio" className="ml-[36px] size-[23px] text-[#12b38a]" /></ObjRow>
        <ObjRow icon="tri" label="HolbeinRetopo" className="bg-[#334d80]" labelClass="text-[#f5a62f]" boxed blue>
          <Ic n="wrencho" className="ml-[36px] size-[23px] text-[#6f97f5]" />
          <span className="ml-[4px] flex h-[28px] w-[31px] items-center justify-center rounded-[6px] border border-[#3c7a90] bg-[#2a5f7a] text-[#10c8a0]"><Ic n="trio" className="size-[23px]" /></span>
        </ObjRow>
        <ObjRow icon="bulb" label="Light"><Ic n="lighto" className="ml-[36px] size-[23px] text-[#12b38a]" /></ObjRow>
        <span className="absolute top-[7px] left-[45px] h-[141px] w-px bg-[#6c6c6c]" />
      </div>
      <div className="h-[31px] bg-[#2b2b2b]" />
      <div className="h-[31px]" />
      <div className="h-[31px] bg-[#2b2b2b]" />
    </div>
  );
}

/* ---------- properties ---------- */
function Tab({ n, c, className = "" }) {
  return <div className={"flex h-[43px] w-full items-center justify-center pl-[4px] " + className}><Ic n={n} className={"size-[23px] " + c} /></div>;
}
function PropRow({ label, className = "", children, dot = "bg-[#dadada]", labelClass = "text-[#dcdcdc]" }) {
  return (
    <div className={"flex h-[29px] items-center " + className}>
      <span className={"w-[150px] text-right " + labelClass}>{label}</span>
      <div className="ml-[15px] flex h-[29px] w-[227px] items-center overflow-hidden rounded-[5px]">{children}</div>
      <span className={"ml-[13px] size-[7px] rounded-full " + dot} />
    </div>
  );
}
function Properties() {
  return (
    <div className="flex h-[597px] flex-col overflow-hidden rounded-[8px] bg-[#303030]">
      <div className="flex h-[39px] items-center justify-between pr-[12px] pb-[1px] pl-[13px] text-[#e6e6e6]">
        <div className="flex h-[31px] w-[48px] items-center rounded-[6px] border border-[#3d3d3d] bg-[#282828] pl-[6px]"><Ic n="props" className="size-[23px]" /><Chev className="ml-[3px] w-[11px]" /></div>
        <div className="h-[31px] w-[187px] rounded-[6px] border border-[#3d3d3d] bg-[#282828]" />
      </div>
      <div className="flex flex-1">
        <div className="flex w-[46px] flex-col bg-[#1d1d1d]">
          <Tab n="printer" c="text-[#b0b0b0]" className="mt-[-1px]" />
          <Tab n="layers" c="text-[#b0b0b0]" />
          <Tab n="scene" c="text-[#b0b0b0]" />
          <Tab n="world" c="text-[#b85560]" />
          <div className="mb-[12px] ml-[8px] h-px bg-[#2a2a2a]" />
          <Tab n="boxo" c="text-[#dcdcdc]" />
          <div className="ml-[8px] h-px bg-[#2a2a2a]" />
          <Tab n="obj" c="text-[#c8844a]" className="mt-[11px]" />
          <Tab n="wrench" c="text-[#6f9dff]" className="mt-[-1px] ml-[5px] w-[41px] rounded-l-[6px] bg-[#303030] !pl-0 !pr-px" />
          <Tab n="particles" c="text-[#5a82d8]" />
          <Tab n="physics" c="text-[#5a82d8]" />
          <Tab n="constraint" c="text-[#5a82d8]" />
          <Tab n="trio" c="text-[#12a880]" />
          <Tab n="material" c="text-[#b85560]" />
          <div className="ml-[8px] h-px bg-[#2a2a2a]" />
        </div>
        <div className="flex w-[475px] flex-col pl-[12px]">
          <div className="mt-[13px] flex h-[30px] items-center pl-[6px] text-[#dcdcdc]"><Ic n="obj" className="size-[23px] text-[#e8e8e8]" /><span className="ml-[13px]">HolbeinRetopo</span></div>
          <div className="relative mt-[28px] ml-[2px] flex h-[29px] w-[449px] items-center rounded-[5px] bg-[#545454] pl-[8px] text-[#e0e0e0] shadow-[0_1px_1px_#0005]"><Ic n="plus" /><span className="flex-1 pr-[6px] text-center">Add Modifier</span></div>
          <div className="mt-[17px] flex h-[314px] w-[451px] flex-col rounded-[6px] border border-[#4772b3] bg-[#3d3d3d] pl-[13px]">
            <div className="mt-[5px] flex h-[29px] items-center text-[#dcdcdc] *:shrink-0">
              <Chev className="ml-[-2px] w-[15px] text-[#a8a8a8]" />
              <Ic n="displace" className="ml-[8px] size-[22px] text-[#bcbcbc]" />
              <div className="ml-[18px] flex h-[29px] w-[294px] gap-px overflow-hidden rounded-[5px] bg-[#303030]">
                <span className="w-[140px] bg-[#1d1d1d] pl-[11px] leading-[29px]">Displace</span>
                <span className="flex w-[30px] items-center justify-center bg-[#4772b3] text-white"><Ic n="trio" className="size-[23px]" /></span>
                <span className="flex w-[30px] items-center justify-center bg-[#4772b3] text-white"><Ic n="editmode" className="size-[23px]" /></span>
                <span className="flex w-[30px] items-center justify-center bg-[#4772b3] text-white"><Ic n="monitor" className="size-[22px]" /></span>
                <span className="flex w-[30px] items-center justify-center bg-[#4772b3] text-white [--hole:#4772b3]"><Ic n="cam" className="size-[22px]" /></span>
                <span className="flex flex-1 items-center justify-center bg-[#282828]"><Chev className="w-[15px]" /></span>
              </div>
              <Ic n="x" className="ml-[6px] size-6" />
              <svg viewBox="0 0 15 7" className="ml-[24px] h-[7px] w-[15px]" fill="#a0a0a0">
                {[0, 1, 2, 3].map((i) => <g key={i}><rect x={i * 4} y="0" width="2" height="2" /><rect x={i * 4} y="4" width="2" height="2" /></g>)}
              </svg>
            </div>
            <div className="mt-[17px] flex h-[29px] w-[423px] gap-px overflow-hidden rounded-[5px] text-[#e0e0e0]">
              <span className="flex w-[47px] items-center bg-[#282828] pl-[7px]"><Ic n="checker" className="size-[23px]" /><Chev className="ml-[3px] w-[11px]" /></span>
              <span className="flex flex-1 items-center bg-[#545454] pl-[8px]"><Ic n="plus" className="size-[22px]" /><span className="flex-1 pl-0 text-center">New</span></span>
            </div>
            <PropRow label="Coordinates" className="mt-[10px]" labelClass="text-[#868686]" dot="bg-[#707070]"><span className="flex h-full w-full items-center justify-between bg-[#323232] pr-[4px] pl-[11px] text-[#808080]">Local<Chev className="w-[11px] opacity-60" /></span></PropRow>
            <PropRow label="Direction" className="mt-[27px]"><span className="flex h-full w-full items-center justify-between bg-[#282828] pr-[4px] pl-[11px] text-[#e6e6e6]">Normal<Chev /></span></PropRow>
            <PropRow label="Strength" className="mt-[27px]"><span className="h-full w-full bg-[#545454] text-center leading-[29px] tracking-[1.4px] text-[#e6e6e6]">1.000</span></PropRow>
            <PropRow label="Midlevel" className="mt-[5px]"><span className="h-full w-full bg-[linear-gradient(to_right,#4772b3_90%,#545454_90%)] text-center leading-[29px] tracking-[1.4px] text-[#e6e6e6]">0.900</span></PropRow>
            <PropRow label="Vertex Group" className="mt-[5px]" dot="bg-transparent">
              <span className="flex h-full w-[196px] items-center bg-[#1d1d1d] pl-[7px] text-[#e6e6e6]"><Ic n="vgroup" className="size-[23px]" /></span>
              <span className="ml-px flex h-full w-[31px] items-center justify-center bg-[#474747] text-[#a0a0a0]"><Ic n="swap" className="size-[22px]" /></span>
            </PropRow>
          </div>
        </div>
      </div>
    </div>
  );
}

/* ---------- top bars ---------- */
function Field({ icon, label, pin, className }) {
  return (
    <div className={"flex h-[31px] overflow-hidden rounded-[6px] border border-[#3d3d3d] " + className}>
      <span className="flex w-[48px] items-center bg-[#282828] pl-[6px]"><Ic n={icon} /><Chev className="ml-[2px] w-[11px]" /></span>
      <span className="flex flex-1 items-center border-l border-[#3d3d3d] bg-[#1d1d1d] pr-[4px] pl-[11px]">{label}{pin && <Ic n="pin" className="ml-auto size-6 text-[#7c7c7c]" />}</span>
      <span className="flex w-[31px] items-center justify-center bg-[#545454]"><Ic n="copy" className="size-[23px]" /></span>
      <span className="flex w-[30px] items-center justify-center bg-[#303030] text-[#727272]"><Ic n="x" /></span>
    </div>
  );
}
function TopBars() {
  return (
    <>
      <div className="flex h-[43px] items-center bg-[#202020] pb-[2px] pl-[12px] text-[#f4f4f4]">
        <Ic n="logo" className="size-[23px] text-[#ea7600] [--hole:#fff] [--pupil:#265787]" />
        <span className="ml-[6px] w-[1697px] font-['Open_Sans','Noto_Sans',sans-serif] text-[16.5px] tracking-[0.27px] whitespace-pre">{"* HolbeinByHand_04_RetopoHandmarks [C:\\Users\\chris\\OneDrive\\Documents\\_MOD\\HolbeinPferd\\ByHand\\ConceptToLoPolyNormalMappedModel\\HolbeinByHand_04_RetopoHandmarks.blend] - Blender 4.1"}</span>
        <svg viewBox="0 0 156 16" className="h-[16px] w-[156px] shrink-0" fill="none" stroke="#fff" strokeWidth="1.300">
          <path d="M0 8 H15 M141 1 L155 15 M155 1 L141 15" />
          <rect x="70" y="1" width="14" height="14" rx="1.500" />
        </svg>
      </div>
      <div className="flex h-[42px] bg-[#181818] text-[#dedede]">
        <div className="flex h-[42px] w-[416px] items-center pb-px pl-[15px] *:shrink-0">
          <Ic n="logo" />
          <span className="w-[70px] pl-[16px]">File</span>
          <span className="w-[57px]">Edit</span><span className="w-[83px]">Render</span><span className="w-[91px]">Window</span><span>Help</span>
        </div>
        <div className="mt-[7px] flex h-[33px] w-[878px] gap-[2px] overflow-hidden text-center leading-[33px] text-[#989898] *:shrink-0 *:rounded-t-[6px] *:bg-[#1d1d1d]">
          <span className="w-[88px]">Layout</span>
          <span className="w-[107px] !bg-[#303030] text-white">Modeling</span>
          <span className="w-[108px]">Sculpting</span>
          <span className="w-[117px]">UV Editing</span>
          <span className="w-[141px]">Texture Paint</span>
          <span className="w-[97px]">Shading</span>
          <span className="w-[113px]">Animation</span>
          <span className="w-[113px]">Rendering</span>
        </div>
        <div className="mt-[5px] ml-[11px] flex gap-[9px]">
          <Field icon="scene" label="Scene" pin className="w-[297px]" />
          <Field icon="layers" label="ViewLayer" className="w-[297px]" />
        </div>
      </div>
    </>
  );
}

function Mouse({ b }) {
  return (
    <svg viewBox="0 0 20 25" className="h-[25px] w-[20px] shrink-0" fill="none" stroke="#8c8c8c" strokeWidth="1.500">
      <rect x="1" y="1" width="17.500" height="22.500" rx="4.500" />
      {b === "l" && <path d="M1 11.500 V5.500 A4.500 4.500 0 0 1 5.500 1 H9 V11.500 Z" fill="#a8a8a8" stroke="none" />}
      {b === "r" && <path d="M18.500 11.500 V5.500 A4.500 4.500 0 0 0 14 1 H10 V11.500 Z" fill="#a8a8a8" stroke="none" />}
      {b === "m" && <rect x="7.500" y="4" width="4.500" height="9" rx="1.500" fill="#a8a8a8" stroke="none" />}
    </svg>
  );
}
function Status() {
  return (
    <div className="flex h-[34px] items-center bg-[#181818] pl-[18px] tracking-[0.8px] text-[#989898]">
      <span className="flex w-[351px] items-center gap-[15px]"><Mouse b="l" />Extrude at Cursor Move</span>
      <span className="flex w-[351px] items-center gap-[15px]"><Mouse b="m" />Rotate View</span>
      <span className="flex flex-1 items-center gap-[15px]"><Mouse b="r" />Call Menu</span>
      <span className="w-[733px] tracking-[0.97px]">HolbeinRetopo | Verts:1/22 | Edges:0/31 | Faces:0/10 | Tris:20 | Objects:1/4 | 4.1.0</span>
    </div>
  );
}

/* ---------- annotations ---------- */
const GREEN = "#5b9a3a";
const ARROWS = [
  "377,173 511,95 508,86 541,84 526,109 517,103 399,173",
  "1150,221 962,133 965,125 932,126 953,152 958,143 1150,233",
  "1150,318 991,350 988,340 962,361 994,370 993,360 1150,328",
  "1225,414 1073,705 1063,700 1063,734 1090,714 1082,710 1237,414",
  "1692,379 1674,339 1664,342 1665,309 1691,330 1683,335 1702,379",
  "1650,546 1458,755 1450,748 1441,780 1472,768 1465,762 1663,546",
  "1713,546 1706,585 1697,583 1707,615 1727,588 1717,586 1724,546",
  "1747,546 1805,818 1795,820 1816,847 1824,815 1814,816 1757,546",
];
function Callout({ lines, className }) {
  return (
    <div className={"absolute flex flex-col items-center justify-center rounded-[4px] bg-[#5b9a3a] pr-[3px] font-['Liberation_Sans',Arial,sans-serif] text-[32px] leading-[37px] font-bold tracking-normal text-white shadow-[1px_3px_5px_rgba(0,0,0,.55)] " + className}>
      {lines.map((l) => <span key={l} className="block scale-x-[0.82] whitespace-nowrap">{l}</span>)}
    </div>
  );
}

export default function App() {
  return (
    <div className="relative h-[1082px] w-[1924px] overflow-hidden bg-[#4a4a4a] pt-px pr-[2px] pl-[2px] font-['Inter','Liberation_Sans',sans-serif] text-[16.5px] tracking-[0.6px] whitespace-nowrap [font-feature-settings:'cv05','cv08']">
      <div className="flex h-[1080px] flex-col overflow-hidden rounded-[8px] bg-[#181818]">
        <TopBars />
        <div className="flex h-[961px] gap-[3px] px-px">
          <Viewport />
          <div className="flex w-[521px] flex-col gap-[4px]"><Outliner /><Properties /></div>
        </div>
        <Status />
      </div>
      <SnapPopover />
      <svg viewBox="0 0 1924 1082" className="absolute inset-0 h-full w-full drop-shadow-[1px_3px_3px_rgba(0,0,0,.5)]">
        {ARROWS.map((p) => <polygon key={p} points={p} fill={GREEN} />)}
      </svg>
      <Callout className="top-[172px] left-[178px] h-[52px] w-[329px]" lines={["1. Modelling Workspace"]} />
      <Callout className="top-[172px] left-[1149px] h-[243px] w-[292px]" lines={["2. Snapping enabled;", "Face Mode;", "Backface Culling;", "Target Selection:", "Active+Edited+Non-", "Edited"]} />
      <Callout className="top-[378px] left-[1563px] h-[169px] w-[342px]" lines={["3. Add Displace modifier", "to new retopo object;", "Enable Edit and Cage;", "adjust Midlevel"]} />
    </div>
  );
}
